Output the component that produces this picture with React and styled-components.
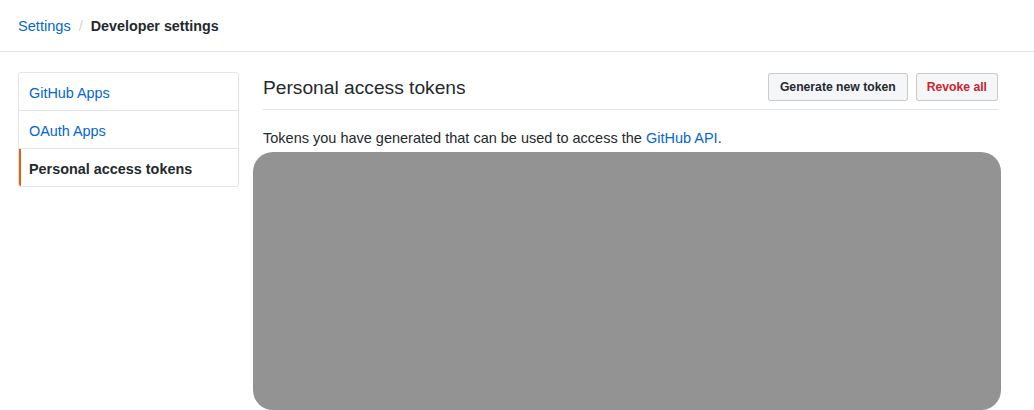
import React from "react";
import styled, { createGlobalStyle } from "styled-components";

const GlobalStyle = createGlobalStyle`
  body {
    margin: 0;
    background: #fff;
    font-family: "Liberation Sans", Arial, sans-serif;
    color: #24292e;
    font-size: 14px;
    overflow: hidden;
  }
`;

const Header = styled.div`
  height: 51px;
  border-bottom: 1px solid #e1e4e8;
  display: flex;
  align-items: center;
  padding: 0 18px;
  font-size: 14.6px;
`;

const Crumb = styled.a`
  color: ${(p) => (p.$current ? "#24292e" : "#0366d6")};
  font-weight: ${(p) => (p.$current ? 700 : 400)};
  font-size: ${(p) => (p.$current ? "14.3px" : "14.6px")};
  text-decoration: none;
  margin-top: 1px;
`;

const Separator = styled.span`
  color: #d1d5da;
  margin: 1px 8px 0 8px;
`;

const Layout = styled.div`
  display: grid;
  grid-template-columns: 221px 1fr;
  gap: 24px;
  padding: 20px 36px 0 18px;
  align-items: start;
`;

const Menu = styled.nav`
  border: 1px solid #e1e4e8;
  border-radius: 3px;
  overflow: hidden;
`;

const MenuItem = styled.a`
  position: relative;
  display: block;
  height: 37px;
  line-height: 37px;
  padding: 2px 10px 0;
  box-sizing: border-box;
  font-size: 14.4px;
  text-decoration: none;
  color: ${(p) => (p.$selected ? "#24292e" : "#0366d6")};
  font-weight: ${(p) => (p.$selected ? 700 : 400)};
  & + & {
    border-top: 1px solid #e1e4e8;
    height: 38px;
  }
  &::before {
    content: "";
    display: ${(p) => (p.$selected ? "block" : "none")};
    position: absolute;
    left: 0;
    top: 0;
    bottom: 0;
    width: 2px;
    background: #e36209;
  }
`;

const Main = styled.div`
  min-width: 0;
`;

const TitleRow = styled.div`
  display: flex;
  align-items: center;
  justify-content: space-between;
  padding: 1px 0 8px;
  border-bottom: 1px solid #e1e4e8;
`;

const Title = styled.h2`
  margin: 2px 0 0;
  font-size: 19.2px;
  font-weight: 400;
  color: #24292e;
`;

const Actions = styled.div`
  display: flex;
  gap: 8px;
`;

const Button = styled.button`
  height: 28px;
  padding: 0 ${(p) => (p.$danger ? "10px" : "11px")};
  font-family: "Liberation Sans", Arial, sans-serif;
  font-size: 12.2px;
  font-weight: 700;
  color: ${(p) => (p.$danger ? "#cb2431" : "#24292e")};
  background: #f4f6f8;
  border: 1px solid rgba(27, 31, 35, 0.2);
  border-radius: 3px;
`;

const Note = styled.p`
  margin: 18px 0 4px;
  font-size: 14.5px;
  line-height: 20px;
  a {
    color: #0366d6;
    text-decoration: none;
  }
`;

const Redacted = styled.div`
  height: 258px;
  margin: 0 -3px 0 -10px;
  background: #939393;
  border-radius: 20px;
`;

export default function App() {
  return (
    <>
      <GlobalStyle />
      <Header>
        <Crumb href="#">Settings</Crumb>
        <Separator>/</Separator>
        <Crumb $current>Developer settings</Crumb>
      </Header>
      <Layout>
        <Menu>
          <MenuItem href="#">GitHub Apps</MenuItem>
          <MenuItem href="#">OAuth Apps</MenuItem>
          <MenuItem $selected>Personal access tokens</MenuItem>
        </Menu>
        <Main>
          <TitleRow>
            <Title>Personal access tokens</Title>
            <Actions>
              <Button>Generate new token</Button>
              <Button $danger>Revoke all</Button>
            </Actions>
          </TitleRow>
          <Note>
            Tokens you have generated that can be used to access the{" "}
            <a href="#">GitHub API</a>.
          </Note>
          <Redacted />
        </Main>
      </Layout>
    </>
  );
}
